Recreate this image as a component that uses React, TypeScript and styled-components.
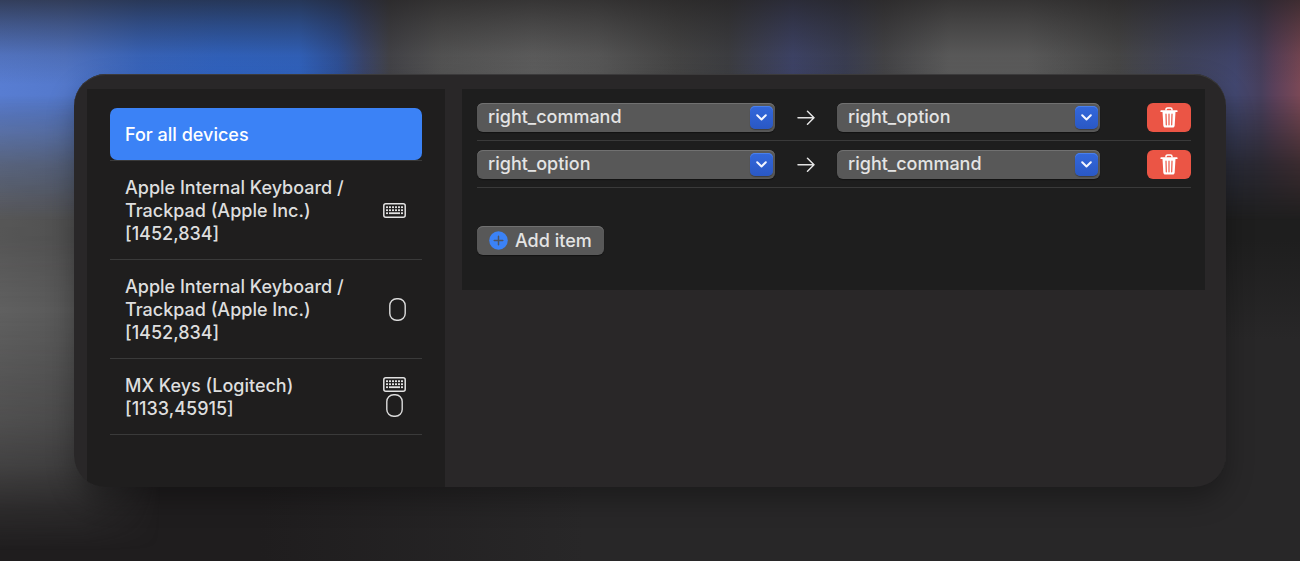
import React from "react";
import styled, { createGlobalStyle } from "styled-components";

const GlobalStyle = createGlobalStyle`
  *, *::before, *::after { box-sizing: border-box; }
  html, body { margin: 0; background: #232223; }
  body, button, select {
    font-family: Inter, "Liberation Sans", sans-serif;
    font-size: 18px;
    font-weight: 500;
    line-height: 23px;
    color: #dedede;
  }
`;

const Desktop = styled.div`
  position: relative;
  isolation: isolate;
  min-height: 100vh;
  padding: 74px;
  overflow: hidden;
  background:
    linear-gradient(to right, #1f1d1e 0%, #1f1d1e 20%, rgba(31, 29, 30, 0) 45%),
    linear-gradient(to bottom, #1e1e1e 0, #1e1e1e 240px, #282728 340px);
`;

const Backdrop = styled.div`
  position: absolute;
  inset: 0;
  z-index: -1;
`;

const GreyGlow = styled(Backdrop)`
  background: linear-gradient(to right, #606060 0, #5b5b5b 50px, #565656 80px, rgba(60, 60, 60, 0) 160px);
  mask-image: linear-gradient(
    to bottom,
    transparent 60px, rgba(0, 0, 0, 0.9) 130px, rgba(0, 0, 0, 0.85) 240px, #000 310px,
    rgba(0, 0, 0, 0.75) 420px, rgba(0, 0, 0, 0.55) 465px, rgba(0, 0, 0, 0.2) 510px, transparent 550px
  );
`;

const ColourBand = styled(Backdrop)`
  background:
    linear-gradient(to bottom, rgba(32, 30, 30, 0.66) 0, rgba(32, 30, 30, 0.4) 25px, rgba(32, 30, 30, 0.12) 55px, rgba(32, 30, 30, 0) 85px),
    linear-gradient(
      to right,
      #587dd2 0%, #5479cc 5%, #3a6ac8 11%, #3268cb 17%, #3267c8 23%, #3054a0 26%,
      #3c4870 28%, #46464b 30%, #585858 34%, #626262 41%, #5c5c5c 46%, #484848 52%,
      #3f4044 56%, #40466c 61%, #3c4056 65%, #47474a 68%, #606060 73%, #606060 79%,
      #4a4a4a 86%, #424660 91%, #424770 95%, #473f5c 97%, #5a405a 98%, #7a4856 100%
    );
  mask-image: linear-gradient(to bottom, #000 0, #000 95px, rgba(0, 0, 0, 0.65) 130px, rgba(0, 0, 0, 0.3) 165px, transparent 220px);
`;

const Window = styled.main`
  display: grid;
  grid-template-columns: 358px minmax(0, 1fr);
  column-gap: 17px;
  padding: 15px 21px 0 13px;
  overflow: hidden;
  border-radius: 32px;
  background: #292728;
  box-shadow: 0 12px 28px rgba(0, 0, 0, 0.3), inset 0 1px 0 #3b3a3b;
`;

const Sidebar = styled.nav`
  padding: 19px 23px 52px;
  background: #1f1e1e;
`;

const DeviceList = styled.ul`
  margin: 0;
  padding: 0;
  list-style: none;
`;

const DeviceItem = styled.li`
  border-bottom: 1px solid #3a3a3a;
`;

const DeviceButton = styled.button<{ $selected?: boolean }>`
  display: flex;
  align-items: center;
  justify-content: space-between;
  width: 100%;
  padding: 15px 16px 14px 15px;
  border: 0;
  border-radius: 7px;
  background: ${(p) => (p.$selected ? "#3b82f6" : "transparent")};
  color: ${(p) => (p.$selected ? "#fff" : "#dedede")};
  text-align: left;
`;

const DeviceName = styled.span`
  white-space: pre-line;
`;

const DeviceIcons = styled.span`
  display: flex;
  flex-direction: column;
  align-items: center;
  gap: 2px;
`;

const Mappings = styled.section`
  align-self: start;
  padding: 5px 14px 35px 15px;
  background: #1e1e1e;
`;

const MappingRow = styled.div`
  display: grid;
  grid-template-columns: minmax(0, 298fr) 62px minmax(0, 263fr) 47px 44px;
  align-items: center;
  padding: 9px 0 8px;
  border-bottom: 1px solid #3a3a3a;

  & > svg { justify-self: center; }
  & > button { grid-column: 5; }
`;

const SelectBox = styled.label`
  display: grid;
  grid-template-columns: minmax(0, 1fr) 23px;
  align-items: center;
  height: 29px;
  padding-right: 2px;
  border-radius: 6px;
  background: #585858;
  box-shadow: inset 0 1px 0 #717171, 0 1px 1px rgba(0, 0, 0, 0.4);
`;

const Select = styled.select`
  grid-area: 1 / 1 / 2 / 3;
  width: 100%;
  height: 29px;
  padding: 0 30px 2px 11px;
  border: 0;
  appearance: none;
  background: transparent;
  color: #e4e4e4;
`;

const Chevron = styled.span`
  grid-area: 1 / 2 / 2 / 3;
  display: flex;
  align-items: center;
  justify-content: center;
  height: 23px;
  border-radius: 5px;
  background: linear-gradient(#3368dc, #2a58c4);
  box-shadow: inset 0 1px 0 #4a80ec, 0 1px 1px rgba(0, 0, 0, 0.3);
  pointer-events: none;
`;

const DeleteButton = styled.button`
  display: flex;
  align-items: center;
  justify-content: center;
  height: 29px;
  padding: 0;
  border: 0;
  border-radius: 6px;
  background: #eb5545;
`;

const AddButton = styled.button`
  display: flex;
  align-items: center;
  gap: 7px;
  height: 29px;
  margin-top: 38px;
  padding: 0 12px;
  border: 0;
  border-radius: 6px;
  background: #585858;
  box-shadow: inset 0 1px 0 #717171, 0 1px 1px rgba(0, 0, 0, 0.4);
  color: #e4e4e4;
`;

const keyRows = [4, 7, 10];
const keyColumns = [4, 7, 10, 13, 16, 19];

const KeyboardIcon = () => (
  <svg width="23" height="15" viewBox="0 0 23 15" fill="none" aria-label="Keyboard">
    <rect x="0.8" y="0.8" width="21.4" height="13.4" rx="2" stroke="#e2e2e2" strokeWidth="1.5" />
    {keyRows.map((y) =>
      keyColumns.map((x) =>
        y === 10 && x > 4 && x < 19 ? null : (
          <rect key={`${x}-${y}`} x={x - 1} y={y - 0.7} width="2" height="1.8" fill="#e2e2e2" />
        )
      )
    )}
    <rect x="6" y="9.3" width="11" height="1.8" fill="#e2e2e2" />
  </svg>
);

const MouseIcon = () => (
  <svg width="17" height="23" viewBox="0 0 17 23" fill="none" aria-label="Pointing device">
    <rect x="0.8" y="0.8" width="15.4" height="21.4" rx="6.8" stroke="#dcdcdc" strokeWidth="1.4" />
  </svg>
);

const ArrowIcon = () => (
  <svg width="18" height="16" viewBox="0 0 18 16" fill="none" stroke="#e2e2e2" strokeWidth="1.5" strokeLinecap="round" strokeLinejoin="round" aria-hidden="true">
    <path d="M1 7.7H17M10.5 1.2L17 7.7L10.5 14.2" />
  </svg>
);

const ChevronIcon = () => (
  <svg width="11" height="7" viewBox="0 0 11 7" fill="none" stroke="#f4f6ff" strokeWidth="2" strokeLinecap="round" strokeLinejoin="round" aria-hidden="true">
    <path d="M1.2 1.2L5.5 5.5L9.8 1.2" />
  </svg>
);

const TrashIcon = () => (
  <svg width="18" height="22" viewBox="0 0 18 22" fill="none" aria-hidden="true">
    <path d="M6 3.6V2.4C6 1.6 6.6 1 7.6 1H10.4C11.4 1 12 1.6 12 2.4V3.6" stroke="#fff" strokeWidth="1.5" />
    <path d="M1.2 4.2H16.8" stroke="#fff" strokeWidth="1.7" strokeLinecap="round" />
    <path d="M2.5 4.6H15.5L14.7 18.5C14.6 19.8 13.9 20.6 12.6 20.6H5.4C4.1 20.6 3.4 19.8 3.3 18.5Z" fill="#fff" />
    <path d="M6 7.2L6.3 17.8M9 7.2V17.8M12 7.2L11.7 17.8" stroke="#eb5545" strokeWidth="1.2" strokeLinecap="round" />
  </svg>
);

const PlusIcon = () => (
  <svg width="19" height="19" viewBox="0 0 19 19" fill="none" aria-hidden="true">
    <circle cx="9.5" cy="9.5" r="9.3" fill="#3b82f6" />
    <path d="M9.5 5.2V13.8M5.2 9.5H13.8" stroke="#4f5562" strokeWidth="1.5" strokeLinecap="round" />
  </svg>
);

type Device = { name: string; keyboard?: boolean; pointing?: boolean };

const devices: Device[] = [
  { name: "For all devices" },
  { name: "Apple Internal Keyboard /\nTrackpad (Apple Inc.)\n[1452,834]", keyboard: true },
  { name: "Apple Internal Keyboard /\nTrackpad (Apple Inc.)\n[1452,834]", pointing: true },
  { name: "MX Keys (Logitech)\n[1133,45915]", keyboard: true, pointing: true },
];

const mappings = [
  { from: "right_command", to: "right_option" },
  { from: "right_option", to: "right_command" },
];

const KeySelect = ({ value, label }: { value: string; label: string }) => (
  <SelectBox>
    <Select defaultValue={value} aria-label={label}>
      <option>right_command</option>
      <option>right_option</option>
    </Select>
    <Chevron>
      <ChevronIcon />
    </Chevron>
  </SelectBox>
);

export default function App() {
  return (
    <>
      <GlobalStyle />
      <Desktop>
        <GreyGlow />
        <ColourBand />
        <Window>
          <Sidebar aria-label="Devices">
            <DeviceList>
              {devices.map((device, index) => (
                <DeviceItem key={index}>
                  <DeviceButton type="button" $selected={index === 0}>
                    <DeviceName>{device.name}</DeviceName>
                    <DeviceIcons>
                      {device.keyboard && <KeyboardIcon />}
                      {device.pointing && <MouseIcon />}
                    </DeviceIcons>
                  </DeviceButton>
                </DeviceItem>
              ))}
            </DeviceList>
          </Sidebar>
          <Mappings aria-label="Modifications">
            {mappings.map((mapping) => (
              <MappingRow key={mapping.from}>
                <KeySelect value={mapping.from} label="From key" />
                <ArrowIcon />
                <KeySelect value={mapping.to} label="To key" />
                <DeleteButton type="button" aria-label="Delete item">
                  <TrashIcon />
                </DeleteButton>
              </MappingRow>
            ))}
            <AddButton type="button">
              <PlusIcon />
              Add item
            </AddButton>
          </Mappings>
        </Window>
      </Desktop>
    </>
  );
}
